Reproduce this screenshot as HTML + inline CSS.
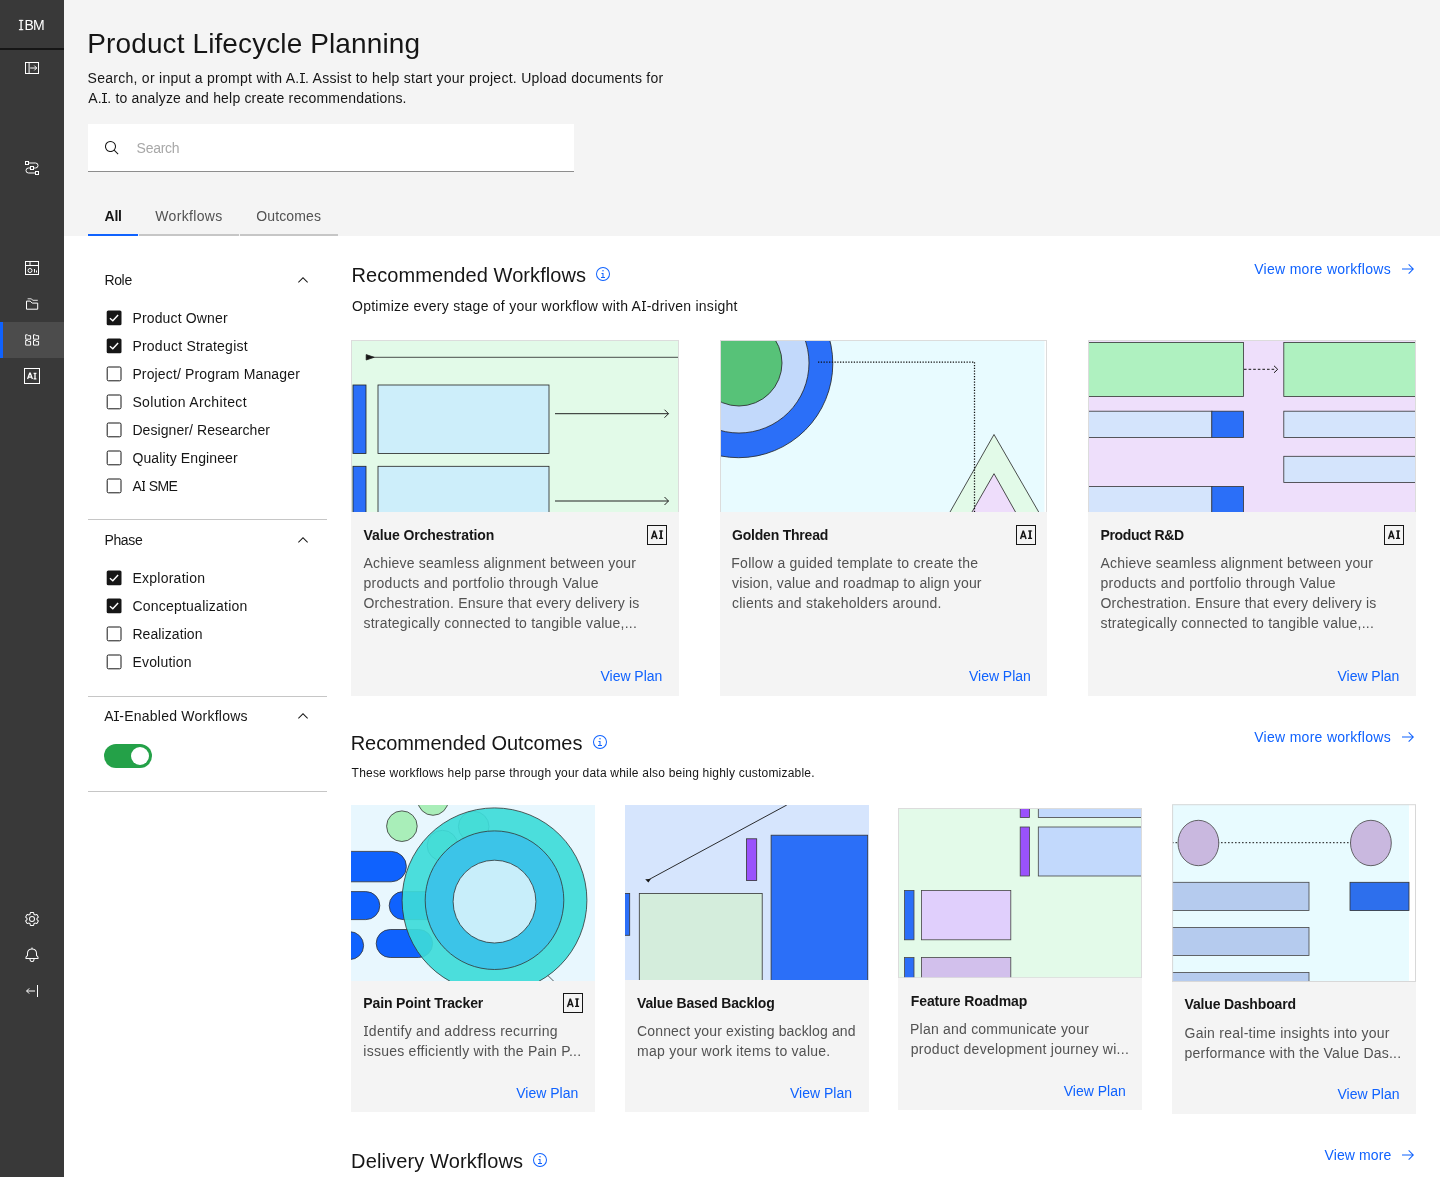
<!DOCTYPE html>
<html lang="en"><head><meta charset="utf-8"><title>Product Lifecycle Planning</title>
<style>
*{box-sizing:border-box;margin:0;padding:0}
html,body{width:1440px;height:1177px;overflow:hidden;background:#fff}
body{position:relative;font-family:"Liberation Sans",sans-serif;color:#161616}
.abs{position:absolute}
.t{position:absolute;white-space:pre;font-family:"Liberation Sans",sans-serif}
#side{position:absolute;left:0;top:0;width:64px;height:1177px;background:#393939}
#side .brand{position:absolute;left:0;top:0;width:64px;height:50px;border-bottom:2px solid #161616}
#side .act{position:absolute;left:0;top:322px;width:64px;height:36px;background:#4c4c4c;border-left:3px solid #0f62fe}
#side svg{position:absolute;left:24px;width:16px;height:16px;overflow:visible}
#hdr{position:absolute;left:64px;top:0;width:1376px;height:236px;background:#f4f4f4}
#search{position:absolute;left:88px;top:124px;width:486px;height:48px;background:#fff;border-bottom:1px solid #8d8d8d}
.tabline{position:absolute;top:234px;height:2px;background:#c6c6c6}
.cb{position:absolute;left:106px;width:17px;height:17px}
.hr{position:absolute;left:88px;width:239px;height:1px;background:#c6c6c6}
.chev{position:absolute;left:295px;width:16px;height:16px}
.card{position:absolute;background:#f4f4f4}
.card svg.img{position:absolute;left:0;top:0;display:block}
.ai{position:absolute;width:20px;height:20px}
.ico{position:absolute;width:16px;height:16px;fill:#0f62fe}
#texts{position:absolute;left:0;top:0;width:1440px;height:1177px;will-change:transform}
.I{display:inline-block;position:relative;line-height:1;padding:0 .05em;font-style:normal}.I:before,.I:after{content:"";position:absolute;left:.035em;right:.035em;height:.08em;background:currentColor}.I:before{top:.131em}.I:after{top:.767em}

</style></head>
<body>
<div id="side">
  <div class="brand" aria-label="IBM"><svg style="left:18px;top:19px;width:6px;height:12px" viewBox="18 19 6 12" fill="#fff"><title>I</title><rect x="20.4" y="19.9" width="1.35" height="10.2"/><rect x="18.9" y="19.85" width="4.4" height="1.1"/><rect x="18.9" y="29.1" width="4.4" height="1.1"/></svg></div>
  <div class="act"></div>
  <!-- open panel -->
  <svg style="top:60px" viewBox="0 0 16 16" fill="none" stroke="#fff" stroke-width="1"><rect x="1.5" y="2.5" width="13" height="11"/><path d="M5.1 2.5v11M6.2 8h6.4M10.3 5.6L12.7 8l-2.4 2.4"/></svg>
  <!-- flow -->
  <svg style="top:160px" viewBox="0 0 16 16" fill="none" stroke="#fff" stroke-width="1"><rect x="1.5" y="1.5" width="3" height="3"/><rect x="6.5" y="6.5" width="3" height="3"/><rect x="11.5" y="11.5" width="3" height="3"/><path d="M4.5 3H11.5a2.5 2.5 0 010 5H9.5M6.5 8H4.5a2.5 2.5 0 000 5H11.5"/></svg>
  <!-- report -->
  <svg style="top:260px" viewBox="0 0 16 16" fill="none" stroke="#fff" stroke-width="1"><rect x="1.5" y="1.5" width="13" height="13"/><path d="M1.5 5.5h13M6 1.5v4M10.5 9v3.5M12.5 10.5v2"/><circle cx="6" cy="10.5" r="2"/></svg>
  <!-- folders -->
  <svg style="top:296px" viewBox="0 0 16 16" fill="none" stroke="#fff" stroke-width="1"><path d="M2.5 13.2V5.1h3.7l2 2h5.5v6.1z"/><path d="M3.6 2.8h3.5l1.9 1.5h4.8" stroke-opacity="0.85"/></svg>
  <!-- grid of folders (active) -->
  <svg style="top:332px" viewBox="0 0 16 16" fill="none" stroke="#fff" stroke-width="1"><path d="M1.7 7.2V2.8h1.8l.8.9h2.3v3.5z"/><path d="M9.5 7.2V2.8h1.8l.8.9h2.5v3.5z"/><path d="M1.7 13.1V8.5h1.8l.8.9h2.3v3.7z"/><path d="M9.5 13.1V8.5h1.8l.8.9h2.5v3.7z"/></svg>
  <!-- AI box -->
  <svg style="top:368px" viewBox="0 0 16 16" fill="none" stroke="#fff" stroke-width="1"><rect x="0.5" y="0.5" width="15" height="15"/><path d="M3.6 11L5.7 5.2h0.6L8.4 11M4.4 9.2h3.2" stroke-width="1.3"/><path d="M9.6 5.3h2.8M9.6 10.8h2.8M11 5.3v5.5" stroke-width="1.3"/></svg>
  <!-- settings -->
  <svg style="top:911px" viewBox="0 0 32 32" fill="#fff"><path d="M27,16.76c0-.25,0-.5,0-.76s0-.51,0-.77l1.92-1.68A2,2,0,0,0,29.3,11L26.94,7a2,2,0,0,0-1.73-1,2,2,0,0,0-.64.1l-2.43.82a11.35,11.35,0,0,0-1.31-.75l-.51-2.52a2,2,0,0,0-2-1.61H13.64a2,2,0,0,0-2,1.61l-.51,2.52a11.48,11.48,0,0,0-1.32.75L7.43,6.06A2,2,0,0,0,6.79,6,2,2,0,0,0,5.06,7L2.7,11a2,2,0,0,0,.41,2.51L5,15.24c0,.25,0,.5,0,.76s0,.51,0,.77L3.11,18.45A2,2,0,0,0,2.7,21L5.06,25a2,2,0,0,0,1.73,1,2,2,0,0,0,.64-.1l2.43-.82a11.35,11.35,0,0,0,1.31.75l.51,2.52a2,2,0,0,0,2,1.61h4.72a2,2,0,0,0,2-1.61l.51-2.52a11.48,11.48,0,0,0,1.32-.75l2.42.82a2,2,0,0,0,.64.1,2,2,0,0,0,1.73-1L29.3,21a2,2,0,0,0-.41-2.51ZM25.21,24l-3.43-1.16a8.86,8.86,0,0,1-2.71,1.57L18.36,28H13.64l-.71-3.55a9.36,9.36,0,0,1-2.7-1.57L6.79,24,4.43,20l2.72-2.4a8.9,8.9,0,0,1,0-3.13L4.43,12,6.79,8l3.43,1.16a8.86,8.86,0,0,1,2.71-1.57L13.64,4h4.72l.71,3.55a9.36,9.36,0,0,1,2.7,1.57L25.21,8,27.57,12l-2.72,2.4a8.9,8.9,0,0,1,0,3.13L27.57,20Z"/><path d="M16,22a6,6,0,1,1,6-6A5.94,5.94,0,0,1,16,22Zm0-10a3.91,3.91,0,0,0-4,4,3.91,3.91,0,0,0,4,4,3.91,3.91,0,0,0,4-4A3.91,3.91,0,0,0,16,12Z"/></svg>
  <!-- bell -->
  <svg style="top:947px" viewBox="0 0 32 32" fill="#fff"><path d="M28.7071,19.293,26,16.5859V13a10.0136,10.0136,0,0,0-9-9.9492V1H15V3.0508A10.0136,10.0136,0,0,0,6,13v3.5859L3.2929,19.293A1,1,0,0,0,3,20v3a1,1,0,0,0,1,1h7v.7768a5.152,5.152,0,0,0,4.5,5.1987A5.0057,5.0057,0,0,0,21,25V24h7a1,1,0,0,0,1-1V20A1,1,0,0,0,28.7071,19.293ZM19,25a3,3,0,0,1-6,0V24h6Zm8-3H5V20.4141L7.707,17.707A1,1,0,0,0,8,17V13a8,8,0,0,1,16,0v4a1,1,0,0,0,.293.707L27,20.4141Z"/></svg>
  <!-- collapse -->
  <svg style="top:983px" viewBox="0 0 16 16" fill="none" stroke="#fff" stroke-width="1"><path d="M13.5 2v12M11 8H2.6M5.2 5.4L2.6 8l2.6 2.6"/></svg>
</div>
<div id="hdr"></div>
<div id="search"><svg class="abs" style="left:16px;top:16px;width:16px;height:16px" viewBox="0 0 32 32" fill="#161616"><path d="M29,27.5859l-7.5521-7.5521a11.0177,11.0177,0,1,0-1.4141,1.4141L27.5859,29ZM4,13a9,9,0,1,1,9,9A9.01,9.01,0,0,1,4,13Z"/></svg></div>
<div class="tabline" style="left:88px;width:50px;background:#0f62fe"></div>
<div class="tabline" style="left:139px;width:100px"></div>
<div class="tabline" style="left:240px;width:98px"></div>

<!-- filter panel -->
<svg class="chev" style="top:272px" viewBox="0 0 32 32" fill="#161616"><path d="M16 10L26 20 24.6 21.4 16 12.8 7.4 21.4 6 20z"/></svg>
<svg class="cb" style="top:310px" viewBox="0 0 17 17"><rect x="0.7" y="0.5" width="14.8" height="14.8" rx="1.6" fill="#161616"/><path d="M3.9 8.3l2.9 2.4 5.3-5.6" stroke="#fff" stroke-width="1.45" fill="none"/></svg>
<svg class="cb" style="top:338px" viewBox="0 0 17 17"><rect x="0.7" y="0.5" width="14.8" height="14.8" rx="1.6" fill="#161616"/><path d="M3.9 8.3l2.9 2.4 5.3-5.6" stroke="#fff" stroke-width="1.45" fill="none"/></svg>
<svg class="cb" style="top:366px" viewBox="0 0 17 17"><rect x="1.2" y="1" width="13.8" height="13.8" rx="1.3" fill="#fff" stroke="#161616" stroke-width="1"/></svg>
<svg class="cb" style="top:394px" viewBox="0 0 17 17"><rect x="1.2" y="1" width="13.8" height="13.8" rx="1.3" fill="#fff" stroke="#161616" stroke-width="1"/></svg>
<svg class="cb" style="top:422px" viewBox="0 0 17 17"><rect x="1.2" y="1" width="13.8" height="13.8" rx="1.3" fill="#fff" stroke="#161616" stroke-width="1"/></svg>
<svg class="cb" style="top:450px" viewBox="0 0 17 17"><rect x="1.2" y="1" width="13.8" height="13.8" rx="1.3" fill="#fff" stroke="#161616" stroke-width="1"/></svg>
<svg class="cb" style="top:478px" viewBox="0 0 17 17"><rect x="1.2" y="1" width="13.8" height="13.8" rx="1.3" fill="#fff" stroke="#161616" stroke-width="1"/></svg>
<div class="hr" style="top:519px"></div>
<svg class="chev" style="top:532px" viewBox="0 0 32 32" fill="#161616"><path d="M16 10L26 20 24.6 21.4 16 12.8 7.4 21.4 6 20z"/></svg>
<svg class="cb" style="top:570px" viewBox="0 0 17 17"><rect x="0.7" y="0.5" width="14.8" height="14.8" rx="1.6" fill="#161616"/><path d="M3.9 8.3l2.9 2.4 5.3-5.6" stroke="#fff" stroke-width="1.45" fill="none"/></svg>
<svg class="cb" style="top:598px" viewBox="0 0 17 17"><rect x="0.7" y="0.5" width="14.8" height="14.8" rx="1.6" fill="#161616"/><path d="M3.9 8.3l2.9 2.4 5.3-5.6" stroke="#fff" stroke-width="1.45" fill="none"/></svg>
<svg class="cb" style="top:626px" viewBox="0 0 17 17"><rect x="1.2" y="1" width="13.8" height="13.8" rx="1.3" fill="#fff" stroke="#161616" stroke-width="1"/></svg>
<svg class="cb" style="top:654px" viewBox="0 0 17 17"><rect x="1.2" y="1" width="13.8" height="13.8" rx="1.3" fill="#fff" stroke="#161616" stroke-width="1"/></svg>
<div class="hr" style="top:696px"></div>
<svg class="chev" style="top:708px" viewBox="0 0 32 32" fill="#161616"><path d="M16 10L26 20 24.6 21.4 16 12.8 7.4 21.4 6 20z"/></svg>
<div class="abs" style="left:104px;top:744px;width:48px;height:24px;border-radius:12px;background:#24a148"><div class="abs" style="left:27px;top:3px;width:18px;height:18px;border-radius:9px;background:#fff"></div></div>
<div class="hr" style="top:791px"></div>
<!--MAINSTART-->
<!-- section 1 heading icons -->
<svg class="ico" style="left:595.3px;top:266.3px" viewBox="0 0 32 32"><path d="M17 22L17 14 13 14 13 16 15 16 15 22 12 22 12 24 20 24 20 22 17 22zM16 8a1.5 1.5 0 101.5 1.5A1.5 1.5 0 0016 8z"/><path d="M16,30A14,14,0,1,1,30,16,14,14,0,0,1,16,30ZM16,4A12,12,0,1,0,28,16,12,12,0,0,0,16,4Z"/></svg>
<svg class="ico" style="left:1400px;top:261px" viewBox="0 0 32 32"><path d="M18 6L16.57 7.393 24.15 15 4 15 4 17 24.15 17 16.57 24.573 18 26 28 16 18 6z"/></svg>

<!-- card 1 : Value Orchestration -->
<div class="card" style="left:351px;top:340px;width:328px;height:356px">
<svg class="img" width="328" height="172" viewBox="351 340 328 172">
<rect x="351" y="340" width="328" height="172" fill="#e2fae8"/>
<g stroke="#222" stroke-width="0.8">
<path d="M366 357.3H679" fill="none"/><path d="M366.2 354.6l8 2.7-8 2.7z" fill="#161616"/>
<rect x="353" y="385" width="13" height="68.5" fill="#2b6ff8"/>
<rect x="378" y="385" width="171" height="68.5" fill="#cdeefa"/>
<rect x="353" y="466.3" width="13" height="50" fill="#2b6ff8"/>
<rect x="378" y="466.3" width="171" height="50" fill="#cdeefa"/>
<path d="M555 413.7H668.5M664.5 409.7l4 4-4 4M555 501H668.5M664.5 497l4 4-4 4" fill="none" stroke-width="1"/>
</g>
<rect x="351.5" y="340.5" width="327" height="172" fill="none" stroke="#dcdcdc"/>
</svg>
<svg class="ai" style="left:296px;top:185px" viewBox="0 0 20 20"><title>AI</title><rect x="0.5" y="0.5" width="19" height="19" fill="none" stroke="#161616"/><path d="M4.55 13.9L7.3 5.75 10.05 13.9M5.6 11.55h3.4" fill="none" stroke="#161616" stroke-width="1.5" stroke-linejoin="bevel"/><path d="M14.05 5.4v8.5" stroke="#161616" stroke-width="1.8"/><path d="M12 6h4.1M12 13.3h4.1" stroke="#161616" stroke-width="1.2"/></svg>
</div>

<!-- card 2 : Golden Thread -->
<div class="card" style="left:720px;top:340px;width:327px;height:356px">
<svg class="img" width="327" height="172" viewBox="720 340 327 172">
<rect x="720" y="340" width="327" height="172" fill="#fff"/>
<rect x="720" y="340" width="324.5" height="172" fill="#e8fbff"/>
<g stroke="#222" stroke-width="0.8">
<circle cx="738.7" cy="363.6" r="94.1" fill="#2b6ff8"/>
<circle cx="739" cy="363" r="70" fill="#c2d9fb"/>
<circle cx="739" cy="363" r="43" fill="#57c278"/>
<path d="M945.5 520L994 434.5 1043.3 520z" fill="#e2fae8"/>
<path d="M967.4 520L994 473.7 1020 520z" fill="#eeddfb"/>
<path d="M818 362H974.5V514" fill="none" stroke="#111" stroke-width="1.25" stroke-dasharray="1.3 1.45"/>
</g>
<rect x="720.5" y="340.5" width="326" height="172" fill="none" stroke="#dcdcdc"/>
</svg>
<svg class="ai" style="left:296px;top:185px" viewBox="0 0 20 20"><title>AI</title><rect x="0.5" y="0.5" width="19" height="19" fill="none" stroke="#161616"/><path d="M4.55 13.9L7.3 5.75 10.05 13.9M5.6 11.55h3.4" fill="none" stroke="#161616" stroke-width="1.5" stroke-linejoin="bevel"/><path d="M14.05 5.4v8.5" stroke="#161616" stroke-width="1.8"/><path d="M12 6h4.1M12 13.3h4.1" stroke="#161616" stroke-width="1.2"/></svg>
</div>

<!-- card 3 : Product R&D -->
<div class="card" style="left:1088px;top:340px;width:328px;height:356px">
<svg class="img" width="328" height="172" viewBox="1088 340 328 172">
<rect x="1088" y="340" width="328" height="172" fill="#eedffb"/>
<g stroke="#333" stroke-width="0.8">
<rect x="1086" y="342.4" width="157.5" height="54.1" fill="#aff1c0"/>
<rect x="1283.8" y="342.4" width="140" height="54.1" fill="#aff1c0"/>
<rect x="1086" y="411.2" width="126" height="26.3" fill="#d4e4fc"/>
<rect x="1211.8" y="411.2" width="31.7" height="26.3" fill="#2b6ff8"/>
<rect x="1283.8" y="411.2" width="140" height="26.3" fill="#d4e4fc"/>
<rect x="1283.8" y="456.3" width="140" height="26.2" fill="#d4e4fc"/>
<rect x="1086" y="486.5" width="126" height="30" fill="#d4e4fc"/>
<rect x="1211.8" y="486.5" width="31.7" height="30" fill="#2b6ff8"/>
<path d="M1244 369.3H1276" fill="none" stroke="#161616" stroke-width="1" stroke-dasharray="2.6 2"/>
<path d="M1274 365.8l3.7 3.5-3.7 3.5" fill="none" stroke="#161616" stroke-width="1"/>
</g>
<rect x="1088.5" y="340.5" width="327" height="172" fill="none" stroke="#dcdcdc"/>
</svg>
<svg class="ai" style="left:296px;top:185px" viewBox="0 0 20 20"><title>AI</title><rect x="0.5" y="0.5" width="19" height="19" fill="none" stroke="#161616"/><path d="M4.55 13.9L7.3 5.75 10.05 13.9M5.6 11.55h3.4" fill="none" stroke="#161616" stroke-width="1.5" stroke-linejoin="bevel"/><path d="M14.05 5.4v8.5" stroke="#161616" stroke-width="1.8"/><path d="M12 6h4.1M12 13.3h4.1" stroke="#161616" stroke-width="1.2"/></svg>
</div>

<!-- section 2 heading icons -->
<svg class="ico" style="left:592.2px;top:734.3px" viewBox="0 0 32 32"><path d="M17 22L17 14 13 14 13 16 15 16 15 22 12 22 12 24 20 24 20 22 17 22zM16 8a1.5 1.5 0 101.5 1.5A1.5 1.5 0 0016 8z"/><path d="M16,30A14,14,0,1,1,30,16,14,14,0,0,1,16,30ZM16,4A12,12,0,1,0,28,16,12,12,0,0,0,16,4Z"/></svg>
<svg class="ico" style="left:1400px;top:729px" viewBox="0 0 32 32"><path d="M18 6L16.57 7.393 24.15 15 4 15 4 17 24.15 17 16.57 24.573 18 26 28 16 18 6z"/></svg>

<!-- outcome 1 : Pain Point Tracker -->
<div class="card" style="left:351px;top:805px;width:244px;height:307px">
<svg class="img" width="244" height="176" viewBox="351 805 244 176">
<rect x="351" y="805" width="244" height="176" fill="#e8f7fe"/>
<g stroke="#333" stroke-width="0.8">
<circle cx="401.9" cy="826.2" r="15.3" fill="#a9eeb9"/>
<circle cx="433" cy="800" r="15.3" fill="#a9eeb9"/>
<rect x="336" y="851.4" width="70.4" height="30.4" rx="15.2" fill="#0f62fe"/>
<rect x="336" y="891.6" width="43.8" height="28" rx="14" fill="#0f62fe"/>
<rect x="389.2" y="891.6" width="56" height="28" rx="14" fill="#0f62fe"/>
<rect x="330" y="931.6" width="33.6" height="28" rx="14" fill="#0f62fe"/>
<rect x="376.2" y="929.5" width="56.4" height="28" rx="14" fill="#0f62fe"/>
<path d="M547 974.7l7 6.8" fill="none"/>
<circle cx="473.7" cy="826.6" r="15.3" fill="#a9eeb9"/>
<circle cx="442.5" cy="845.6" r="15.3" fill="#a9eeb9"/>
<circle cx="494.5" cy="900.3" r="92.4" fill="#3ddbd9" fill-opacity="0.92"/>
<circle cx="494.5" cy="900.2" r="69.3" fill="#3cc4e8"/>
<circle cx="494.5" cy="901.6" r="41.4" fill="#c8eefa"/>
</g>
</svg>
<svg class="ai" style="left:212px;top:188px" viewBox="0 0 20 20"><title>AI</title><rect x="0.5" y="0.5" width="19" height="19" fill="none" stroke="#161616"/><path d="M4.55 13.9L7.3 5.75 10.05 13.9M5.6 11.55h3.4" fill="none" stroke="#161616" stroke-width="1.5" stroke-linejoin="bevel"/><path d="M14.05 5.4v8.5" stroke="#161616" stroke-width="1.8"/><path d="M12 6h4.1M12 13.3h4.1" stroke="#161616" stroke-width="1.2"/></svg>
</div>

<!-- outcome 2 : Value Based Backlog -->
<div class="card" style="left:625px;top:805px;width:243.5px;height:307px">
<svg class="img" width="243.5" height="175" viewBox="625 805 243.5 175">
<rect x="624" y="805" width="245" height="176" fill="#d6e5fd"/>
<g stroke="#333" stroke-width="0.8">
<rect x="771.1" y="835.2" width="96.6" height="150" fill="#2b6ff8"/>
<rect x="746.6" y="838.8" width="10.1" height="41.8" fill="#9a52fc"/>
<rect x="639.3" y="893.4" width="122.9" height="92" fill="#d4eddc"/>
<rect x="620" y="893.4" width="9.7" height="41.9" fill="#2b6ff8"/>
<path d="M786.8 805L647.8 880.2" fill="none" stroke="#161616" stroke-width="0.9"/>
<path d="M645.2 879.2l5.6-.2-2.4 3.6z" fill="#161616" stroke="none"/>
</g>
</svg>
</div>

<!-- outcome 3 : Feature Roadmap -->
<div class="card" style="left:898px;top:808px;width:244px;height:302px">
<svg class="img" width="244" height="170" viewBox="898 808 244 170">
<rect x="898" y="808" width="244" height="170" fill="#e3fae9"/>
<g stroke="#444" stroke-width="0.8">
<rect x="1020.2" y="800" width="9.4" height="17.6" fill="#9a52fc"/>
<rect x="1038.3" y="800" width="110" height="17.6" fill="#c2d9fc"/>
<rect x="1020.2" y="827" width="9.4" height="49" fill="#9a52fc"/>
<rect x="1038.3" y="827" width="110" height="49" fill="#c2d9fc"/>
<rect x="904.6" y="890.4" width="9.4" height="49.4" fill="#2b6ff8"/>
<rect x="921.4" y="890.4" width="89.4" height="49.4" fill="#e0cffc"/>
<rect x="904.6" y="957.6" width="9.4" height="30" fill="#2b6ff8"/>
<rect x="921.4" y="957.6" width="89.4" height="30" fill="#d2c0ec"/>
</g>
<rect x="898.5" y="808.5" width="243" height="169.2" fill="none" stroke="#dcdcdc"/>
</svg>
</div>

<!-- outcome 4 : Value Dashboard -->
<div class="card" style="left:1172px;top:804px;width:244px;height:310px">
<svg class="img" width="244" height="178" viewBox="1172 804 244 178">
<rect x="1172" y="804" width="244" height="178" fill="#fff"/>
<rect x="1172" y="804" width="237" height="178" fill="#e8fbff"/>
<g stroke="#444" stroke-width="0.8">
<path d="M1172 842.7H1371" fill="none" stroke="#161616" stroke-width="1" stroke-dasharray="1.6 1.9"/>
<ellipse cx="1198.4" cy="843" rx="20.4" ry="22.7" fill="#c9b8df"/>
<ellipse cx="1370.9" cy="843" rx="20.4" ry="22.7" fill="#c9b8df"/>
<rect x="1165" y="882.3" width="144" height="28.3" fill="#b5cbee"/>
<rect x="1350" y="882.3" width="59" height="28.3" fill="#2d6fed" stroke="#333"/>
<rect x="1165" y="927.5" width="144" height="27.9" fill="#b5cbee"/>
<rect x="1165" y="972.6" width="144" height="20" fill="#b5cbee"/>
</g>
<rect x="1172.6" y="804.7" width="242.9" height="176.8" fill="none" stroke="#d8d8d8"/>
</svg>
</div>

<!-- delivery heading icons -->
<svg class="ico" style="left:532px;top:1152.3px" viewBox="0 0 32 32"><path d="M17 22L17 14 13 14 13 16 15 16 15 22 12 22 12 24 20 24 20 22 17 22zM16 8a1.5 1.5 0 101.5 1.5A1.5 1.5 0 0016 8z"/><path d="M16,30A14,14,0,1,1,30,16,14,14,0,0,1,16,30ZM16,4A12,12,0,1,0,28,16,12,12,0,0,0,16,4Z"/></svg>
<svg class="ico" style="left:1400px;top:1147.2px" viewBox="0 0 32 32"><path d="M18 6L16.57 7.393 24.15 15 4 15 4 17 24.15 17 16.57 24.573 18 26 28 16 18 6z"/></svg>
<!--MAINEND-->

<div id="texts">
<span class="t" id="t0" style="left:24.50px;top:15.15px;font-size:14px;line-height:20px;letter-spacing:-0.900px;color:#ffffff">BM</span>
<span class="t" id="t1" style="left:87.30px;top:23.80px;font-size:28px;line-height:39px;letter-spacing:0.109px;color:#161616">Product Lifecycle Planning</span>
<span class="t" id="t2" style="left:87.60px;top:68.15px;font-size:14px;line-height:20px;letter-spacing:0.267px;color:#161616">Search, or input a prompt with A.<i class="I">I</i>. Assist to help start your project. Upload documents for</span>
<span class="t" id="t3" style="left:88.20px;top:88.15px;font-size:14px;line-height:20px;letter-spacing:0.186px;color:#161616">A.<i class="I">I</i>. to analyze and help create recommendations.</span>
<span class="t" id="t4" style="left:136.60px;top:138.15px;font-size:14px;line-height:20px;letter-spacing:-0.292px;color:#a8a8a8">Search</span>
<span class="t" id="t5" style="left:104.50px;top:206.15px;font-size:14px;line-height:20px;letter-spacing:-0.195px;color:#161616;font-weight:700">All</span>
<span class="t" id="t6" style="left:155.30px;top:206.15px;font-size:14px;line-height:20px;letter-spacing:0.336px;color:#525252">Workflows</span>
<span class="t" id="t7" style="left:256.20px;top:206.15px;font-size:14px;line-height:20px;letter-spacing:0.141px;color:#525252">Outcomes</span>
<span class="t" id="t8" style="left:104.40px;top:270.15px;font-size:14px;line-height:20px;letter-spacing:-0.332px;color:#161616">Role</span>
<span class="t" id="t9" style="left:132.40px;top:308.15px;font-size:14px;line-height:20px;letter-spacing:0.152px;color:#161616">Product Owner</span>
<span class="t" id="t10" style="left:132.40px;top:336.15px;font-size:14px;line-height:20px;letter-spacing:0.231px;color:#161616">Product Strategist</span>
<span class="t" id="t11" style="left:132.40px;top:364.15px;font-size:14px;line-height:20px;letter-spacing:0.140px;color:#161616">Project/ Program Manager</span>
<span class="t" id="t12" style="left:132.40px;top:392.15px;font-size:14px;line-height:20px;letter-spacing:0.355px;color:#161616">Solution Architect</span>
<span class="t" id="t13" style="left:132.40px;top:420.15px;font-size:14px;line-height:20px;letter-spacing:0.075px;color:#161616">Designer/ Researcher</span>
<span class="t" id="t14" style="left:132.40px;top:448.15px;font-size:14px;line-height:20px;letter-spacing:0.119px;color:#161616">Quality Engineer</span>
<span class="t" id="t15" style="left:132.40px;top:476.15px;font-size:14px;line-height:20px;letter-spacing:-0.689px;color:#161616">A<i class="I">I</i> SME</span>
<span class="t" id="t16" style="left:104.40px;top:530.15px;font-size:14px;line-height:20px;letter-spacing:-0.326px;color:#161616">Phase</span>
<span class="t" id="t17" style="left:132.40px;top:568.15px;font-size:14px;line-height:20px;letter-spacing:0.255px;color:#161616">Exploration</span>
<span class="t" id="t18" style="left:132.40px;top:596.15px;font-size:14px;line-height:20px;letter-spacing:0.225px;color:#161616">Conceptualization</span>
<span class="t" id="t19" style="left:132.40px;top:624.15px;font-size:14px;line-height:20px;letter-spacing:0.083px;color:#161616">Realization</span>
<span class="t" id="t20" style="left:132.40px;top:652.15px;font-size:14px;line-height:20px;letter-spacing:0.201px;color:#161616">Evolution</span>
<span class="t" id="t21" style="left:104.20px;top:706.15px;font-size:14px;line-height:20px;letter-spacing:0.239px;color:#161616">A<i class="I">I</i>-Enabled Workflows</span>
<span class="t" id="t22" style="left:351.50px;top:261.07px;font-size:20px;line-height:28px;letter-spacing:0.073px;color:#161616">Recommended Workflows</span>
<span class="t" id="t23" style="left:352.00px;top:296.15px;font-size:14px;line-height:20px;letter-spacing:0.259px;color:#161616">Optimize every stage of your workflow with A<i class="I">I</i>-driven insight</span>
<span class="t" id="t24" style="left:1254.20px;top:259.15px;font-size:14px;line-height:20px;letter-spacing:0.293px;color:#0f62fe">View more workflows</span>
<span class="t" id="t25" style="left:363.50px;top:525.15px;font-size:14px;line-height:20px;letter-spacing:-0.082px;color:#161616;font-weight:700">Value Orchestration</span>
<span class="t" id="t26" style="left:363.50px;top:553.15px;font-size:14px;line-height:20px;letter-spacing:0.188px;color:#525252">Achieve seamless alignment between your</span>
<span class="t" id="t27" style="left:363.50px;top:573.15px;font-size:14px;line-height:20px;letter-spacing:0.295px;color:#525252">products and portfolio through Value</span>
<span class="t" id="t28" style="left:363.50px;top:593.15px;font-size:14px;line-height:20px;letter-spacing:0.189px;color:#525252">Orchestration. Ensure that every delivery is</span>
<span class="t" id="t29" style="left:363.50px;top:613.15px;font-size:14px;line-height:20px;letter-spacing:0.215px;color:#525252">strategically connected to tangible value,...</span>
<span class="t" id="t30" style="left:600.50px;top:666.15px;font-size:14px;line-height:20px;letter-spacing:-0.027px;color:#0f62fe">View Plan</span>
<span class="t" id="t31" style="left:732.00px;top:525.15px;font-size:14px;line-height:20px;letter-spacing:-0.208px;color:#161616;font-weight:700">Golden Thread</span>
<span class="t" id="t32" style="left:731.30px;top:553.15px;font-size:14px;line-height:20px;letter-spacing:0.252px;color:#525252">Follow a guided template to create the</span>
<span class="t" id="t33" style="left:732.00px;top:573.15px;font-size:14px;line-height:20px;letter-spacing:0.155px;color:#525252">vision, value and roadmap to align your</span>
<span class="t" id="t34" style="left:732.00px;top:593.15px;font-size:14px;line-height:20px;letter-spacing:0.256px;color:#525252">clients and stakeholders around.</span>
<span class="t" id="t35" style="left:969.00px;top:666.15px;font-size:14px;line-height:20px;letter-spacing:-0.027px;color:#0f62fe">View Plan</span>
<span class="t" id="t36" style="left:1100.50px;top:525.15px;font-size:14px;line-height:20px;letter-spacing:-0.362px;color:#161616;font-weight:700">Product R&amp;D</span>
<span class="t" id="t37" style="left:1100.50px;top:553.15px;font-size:14px;line-height:20px;letter-spacing:0.188px;color:#525252">Achieve seamless alignment between your</span>
<span class="t" id="t38" style="left:1100.50px;top:573.15px;font-size:14px;line-height:20px;letter-spacing:0.295px;color:#525252">products and portfolio through Value</span>
<span class="t" id="t39" style="left:1100.50px;top:593.15px;font-size:14px;line-height:20px;letter-spacing:0.189px;color:#525252">Orchestration. Ensure that every delivery is</span>
<span class="t" id="t40" style="left:1100.50px;top:613.15px;font-size:14px;line-height:20px;letter-spacing:0.215px;color:#525252">strategically connected to tangible value,...</span>
<span class="t" id="t41" style="left:1337.50px;top:666.15px;font-size:14px;line-height:20px;letter-spacing:-0.027px;color:#0f62fe">View Plan</span>
<span class="t" id="t42" style="left:350.70px;top:729.07px;font-size:20px;line-height:28px;letter-spacing:-0.033px;color:#161616">Recommended Outcomes</span>
<span class="t" id="t43" style="left:351.60px;top:765.34px;font-size:12px;line-height:17px;letter-spacing:0.206px;color:#161616">These workflows help parse through your data while also being highly customizable.</span>
<span class="t" id="t44" style="left:1254.20px;top:727.15px;font-size:14px;line-height:20px;letter-spacing:0.293px;color:#0f62fe">View more workflows</span>
<span class="t" id="t45" style="left:363.30px;top:993.15px;font-size:14px;line-height:20px;letter-spacing:-0.128px;color:#161616;font-weight:700">Pain Point Tracker</span>
<span class="t" id="t46" style="left:363.30px;top:1021.15px;font-size:14px;line-height:20px;letter-spacing:0.262px;color:#525252"><i class="I">I</i>dentify and address recurring</span>
<span class="t" id="t47" style="left:363.30px;top:1041.15px;font-size:14px;line-height:20px;letter-spacing:0.249px;color:#525252">issues efficiently with the Pain P...</span>
<span class="t" id="t48" style="left:516.30px;top:1083.15px;font-size:14px;line-height:20px;letter-spacing:-0.014px;color:#0f62fe">View Plan</span>
<span class="t" id="t49" style="left:637.05px;top:993.15px;font-size:14px;line-height:20px;letter-spacing:-0.175px;color:#161616;font-weight:700">Value Based Backlog</span>
<span class="t" id="t50" style="left:637.05px;top:1021.15px;font-size:14px;line-height:20px;letter-spacing:0.140px;color:#525252">Connect your existing backlog and</span>
<span class="t" id="t51" style="left:637.05px;top:1041.15px;font-size:14px;line-height:20px;letter-spacing:0.258px;color:#525252">map your work items to value.</span>
<span class="t" id="t52" style="left:790.05px;top:1083.15px;font-size:14px;line-height:20px;letter-spacing:-0.014px;color:#0f62fe">View Plan</span>
<span class="t" id="t53" style="left:910.80px;top:991.15px;font-size:14px;line-height:20px;letter-spacing:-0.125px;color:#161616;font-weight:700">Feature Roadmap</span>
<span class="t" id="t54" style="left:910.00px;top:1019.15px;font-size:14px;line-height:20px;letter-spacing:0.219px;color:#525252">Plan and communicate your</span>
<span class="t" id="t55" style="left:910.80px;top:1039.15px;font-size:14px;line-height:20px;letter-spacing:0.271px;color:#525252">product development journey wi...</span>
<span class="t" id="t56" style="left:1063.80px;top:1081.15px;font-size:14px;line-height:20px;letter-spacing:-0.014px;color:#0f62fe">View Plan</span>
<span class="t" id="t57" style="left:1184.55px;top:994.15px;font-size:14px;line-height:20px;letter-spacing:-0.150px;color:#161616;font-weight:700">Value Dashboard</span>
<span class="t" id="t58" style="left:1184.55px;top:1023.15px;font-size:14px;line-height:20px;letter-spacing:0.254px;color:#525252">Gain real-time insights into your</span>
<span class="t" id="t59" style="left:1184.55px;top:1043.15px;font-size:14px;line-height:20px;letter-spacing:0.208px;color:#525252">performance with the Value Das...</span>
<span class="t" id="t60" style="left:1337.55px;top:1084.15px;font-size:14px;line-height:20px;letter-spacing:-0.014px;color:#0f62fe">View Plan</span>
<span class="t" id="t61" style="left:351.10px;top:1147.07px;font-size:20px;line-height:28px;letter-spacing:0.131px;color:#161616">Delivery Workflows</span>
<span class="t" id="t62" style="left:1324.50px;top:1145.15px;font-size:14px;line-height:20px;letter-spacing:0.114px;color:#0f62fe">View more</span>
</div>
</body></html>
